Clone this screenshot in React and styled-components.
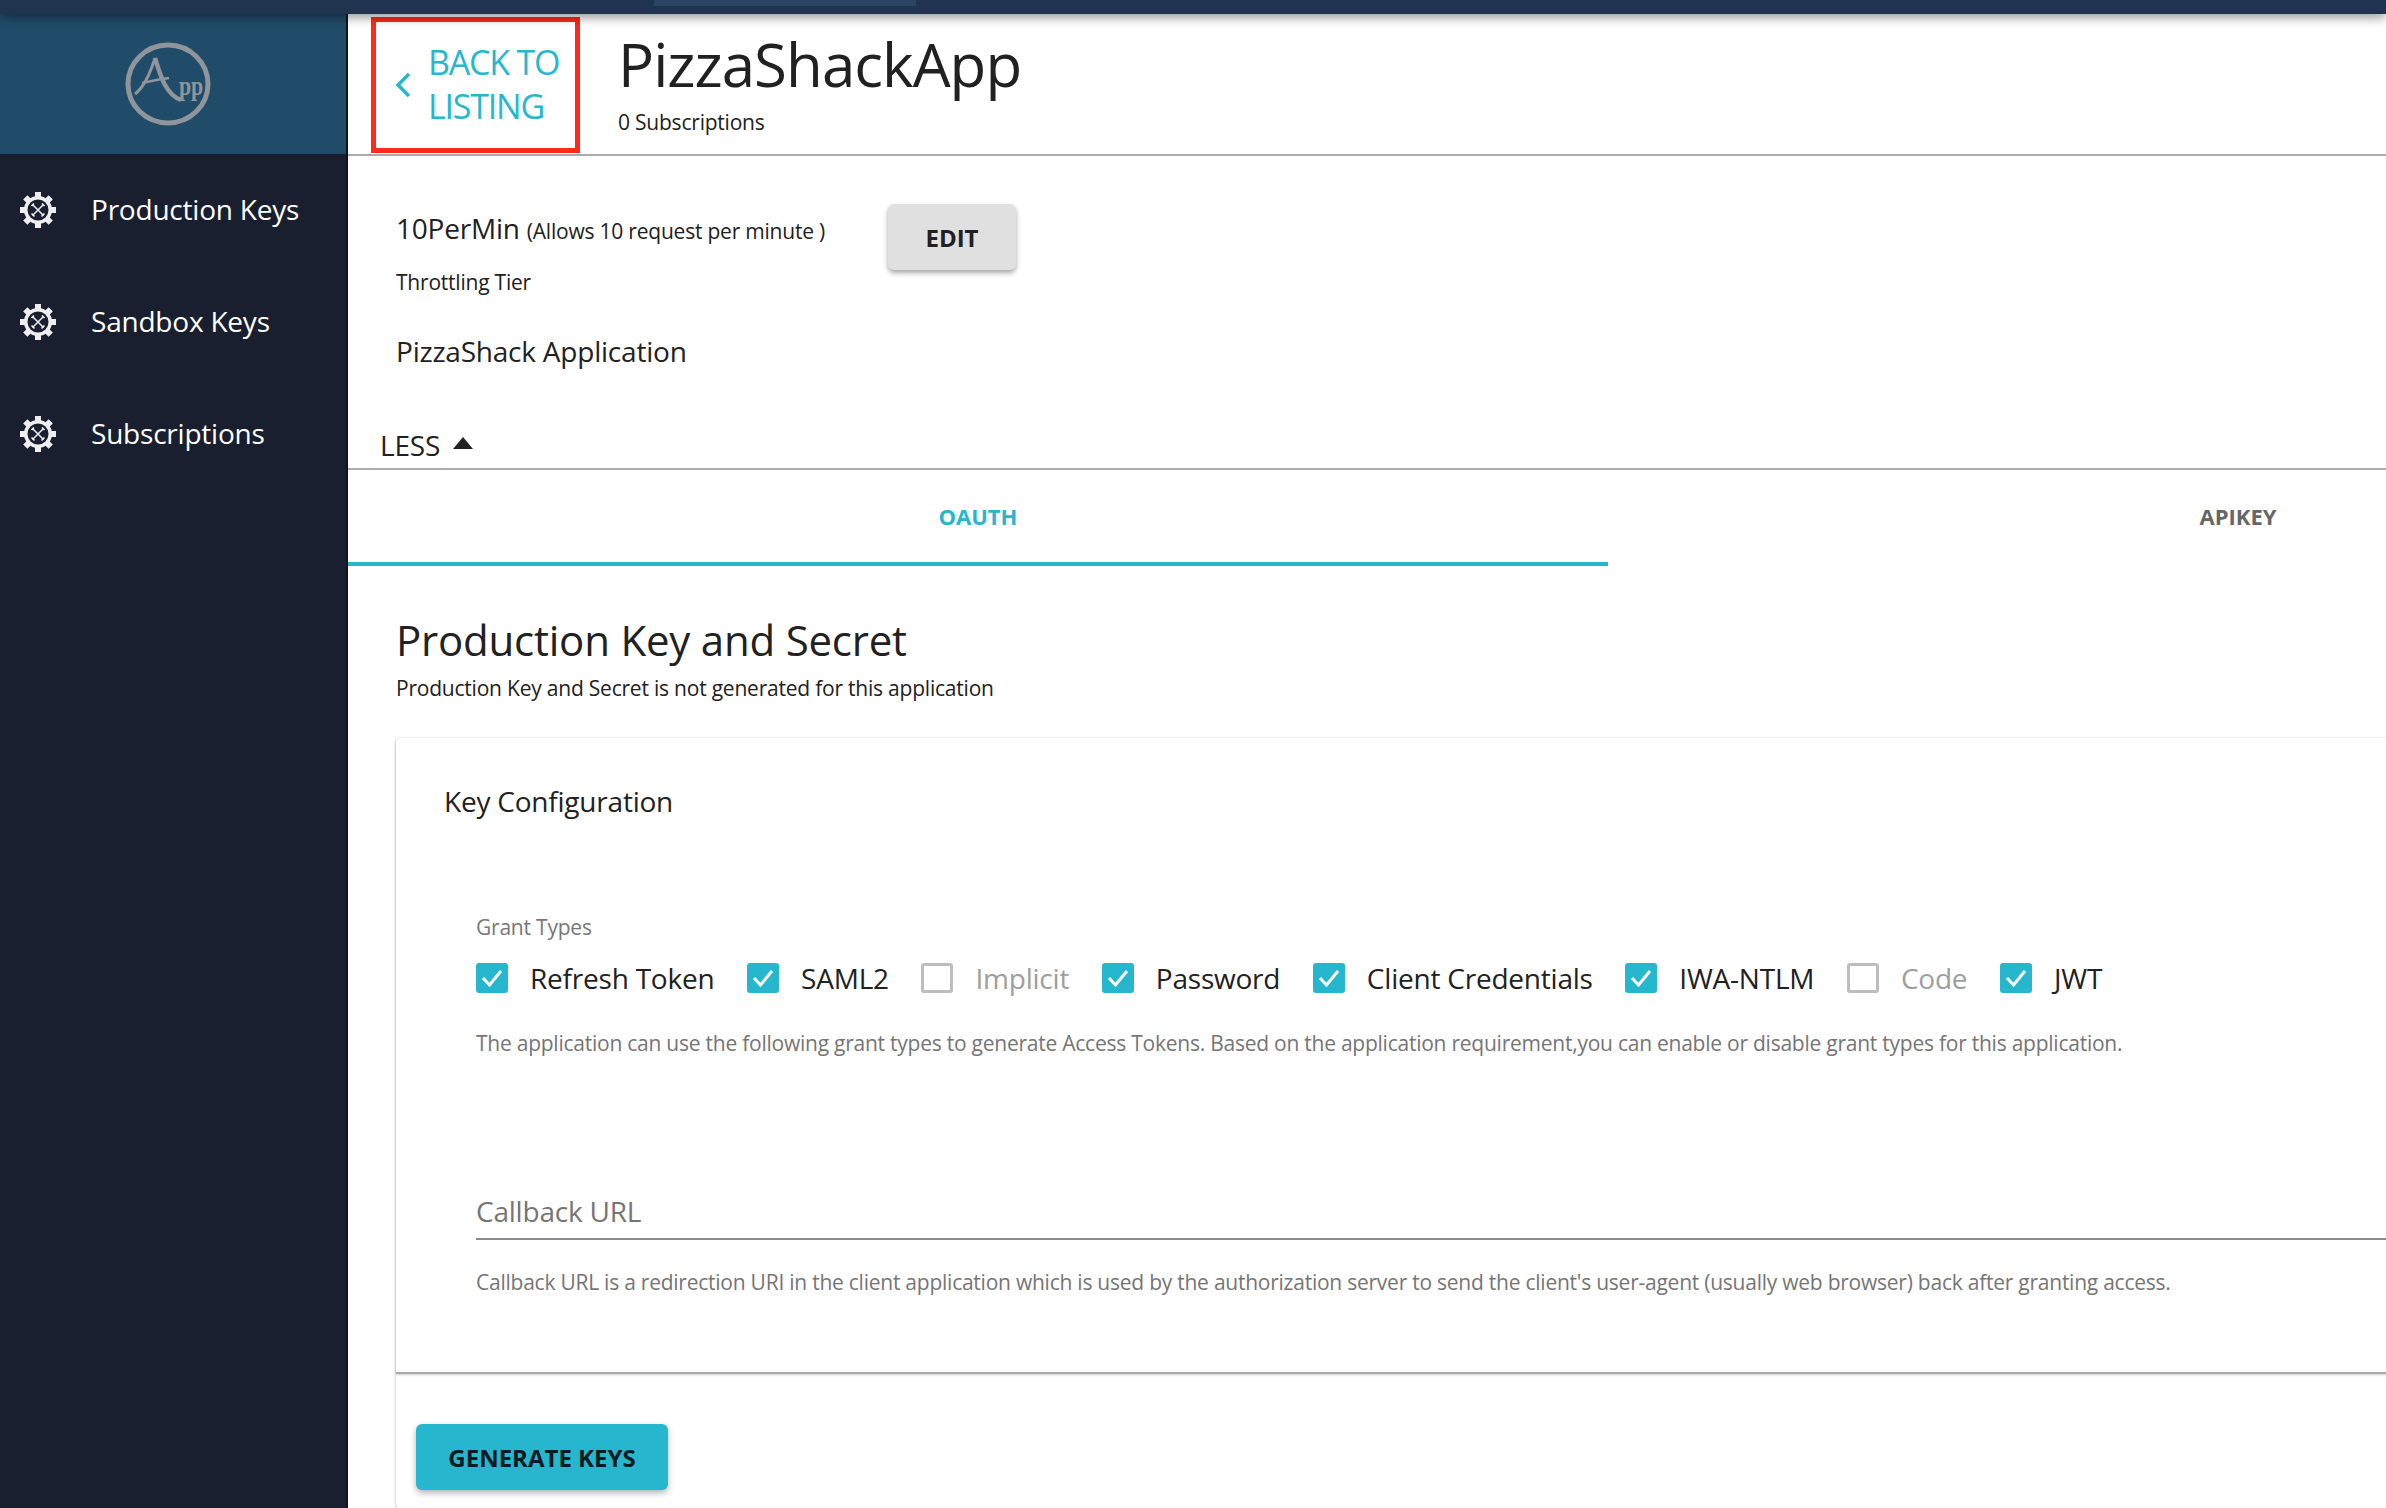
import React from 'react'
import styled, { createGlobalStyle } from 'styled-components'

const GlobalStyle = createGlobalStyle`
  html, body {
    margin: 0;
    padding: 0;
    background: #fff;
    overflow: hidden;
  }
  * {
    box-sizing: border-box;
  }
  body {
    font-family: "Open Sans", "Liberation Sans", sans-serif;
    color: #212121;
    letter-spacing: -0.0135em;
  }
`

const grants = [
  { label: 'Refresh Token', checked: true },
  { label: 'SAML2', checked: true },
  { label: 'Implicit', checked: false },
  { label: 'Password', checked: true },
  { label: 'Client Credentials', checked: true },
  { label: 'IWA-NTLM', checked: true },
  { label: 'Code', checked: false },
  { label: 'JWT', checked: true },
]

const navItems = ['Production Keys', 'Sandbox Keys', 'Subscriptions']

function GearIcon() {
  const teeth = [0, 45, 90, 135, 180, 225, 270, 315]
  return (
    <svg width="36" height="36" viewBox="0 0 36 36">
      {teeth.map((a) => (
        <rect key={a} x="15" y="0" width="6" height="7" fill="#eeeeee" transform={`rotate(${a} 18 18)`} />
      ))}
      <circle cx="18" cy="18" r="14" fill="#eeeeee" />
      <circle cx="18" cy="18" r="10.5" fill="#191f2e" />
      <path d="M13 13 L23 23 M23 13 L13 23" stroke="#eeeeee" strokeWidth="1.5" strokeLinecap="round" />
      <path d="M11.5 14 L14 11.5 M22 11.5 L24.5 14 M21.5 24.5 L24.5 21.5 M11.5 21.5 L14.5 24.5" stroke="#eeeeee" strokeWidth="1.6" />
    </svg>
  )
}

function AppLogo() {
  return (
    <svg width="90" height="88" viewBox="0 0 90 88">
      <ellipse cx="45" cy="44" rx="40" ry="39" fill="none" stroke="#8f959b" strokeWidth="5" />
      <path d="M12 54 C20 48 27 34 32 18" fill="none" stroke="#8f959b" strokeWidth="3" />
      <path d="M32 18 C37 34 42 54 58 60" fill="none" stroke="#8f959b" strokeWidth="4.5" />
      <path d="M19 43 C28 41 37 39 46 38" fill="none" stroke="#8f959b" strokeWidth="2.5" />
      <text x="56" y="55" fontFamily="Liberation Serif, serif" fontWeight="700" fontSize="27" fill="#8f959b" textLength="24" lengthAdjust="spacingAndGlyphs">pp</text>
    </svg>
  )
}

function CheckMark() {
  return (
    <svg width="22" height="20" viewBox="0 0 22 20">
      <path d="M2 10 L8.5 17 L20 3" fill="none" stroke="#fff" strokeWidth="3" />
    </svg>
  )
}

export default function App() {
  return (
    <>
      <GlobalStyle />
      <Page>
        <TopBar>
          <TopBarTab />
        </TopBar>
        <Body>
          <Sidebar>
            <LogoArea>
              <AppLogo />
            </LogoArea>
            <Nav>
              {navItems.map((item) => (
                <NavItem key={item}>
                  <GearIcon />
                  <NavLabel>{item}</NavLabel>
                </NavItem>
              ))}
            </Nav>
          </Sidebar>
          <Main>
            <Header>
              <BackBox>
                <svg width="16" height="26" viewBox="0 0 16 26">
                  <path d="M14 2 L3 13 L14 24" fill="none" stroke="#26b7ce" strokeWidth="3.5" />
                </svg>
                <BackText>
                  BACK TO
                  <br />
                  LISTING
                </BackText>
              </BackBox>
              <TitleBlock>
                <Title>PizzaShackApp</Title>
                <SubCount>0 Subscriptions</SubCount>
              </TitleBlock>
            </Header>

            <Details>
              <TierRow>
                <div>
                  <TierName>
                    10PerMin <TierNote>(Allows 10 request per minute )</TierNote>
                  </TierName>
                  <TierCaption>Throttling Tier</TierCaption>
                </div>
                <EditButton>EDIT</EditButton>
              </TierRow>
              <AppName>PizzaShack Application</AppName>
              <LessToggle>
                LESS
                <Triangle />
              </LessToggle>
            </Details>

            <Tabs>
              <Tab $active>OAUTH</Tab>
              <Tab>APIKEY</Tab>
            </Tabs>

            <Content>
              <SectionTitle>Production Key and Secret</SectionTitle>
              <SectionNote>Production Key and Secret is not generated for this application</SectionNote>
              <Card>
                <CardBody>
                  <CardTitle>Key Configuration</CardTitle>
                  <FieldLabel>Grant Types</FieldLabel>
                  <GrantRow>
                    {grants.map((g) => (
                      <Grant key={g.label}>
                        <CheckBox $checked={g.checked}>{g.checked && <CheckMark />}</CheckBox>
                        <GrantLabel $checked={g.checked}>{g.label}</GrantLabel>
                      </Grant>
                    ))}
                  </GrantRow>
                  <HelpText>
                    The application can use the following grant types to generate Access Tokens. Based on the application requirement,you can enable or disable grant types for this application.
                  </HelpText>
                  <UrlField>Callback URL</UrlField>
                  <UrlHelp>
                    Callback URL is a redirection URI in the client application which is used by the authorization server to send the client's user-agent (usually web browser) back after granting access.
                  </UrlHelp>
                </CardBody>
                <CardActions>
                  <GenerateButton>GENERATE KEYS</GenerateButton>
                </CardActions>
              </Card>
            </Content>
          </Main>
        </Body>
      </Page>
    </>
  )
}

const Page = styled.div`
  width: 2386px;
  height: 1508px;
  display: flex;
  flex-direction: column;
  overflow: hidden;
`

const TopBar = styled.div`
  height: 14px;
  flex: none;
  background: #20344f;
  box-shadow: 0 3px 12px rgba(0, 0, 0, 0.45);
  position: relative;
  z-index: 2;
`

const TopBarTab = styled.div`
  width: 262px;
  height: 6px;
  margin-left: 654px;
  background: #2a4562;
`

const Body = styled.div`
  flex: 1;
  display: flex;
  min-height: 0;
`

const Sidebar = styled.aside`
  width: 348px;
  flex: none;
  background: #191f2e;
  border-right: 2px solid #10141d;
`

const LogoArea = styled.div`
  height: 140px;
  background: #214c69;
  display: flex;
  align-items: center;
  justify-content: center;
  padding: 0 10px 0 0;
`

const Nav = styled.nav`
  padding-top: 0;
`

const NavItem = styled.div`
  height: 112px;
  display: flex;
  align-items: center;
  padding: 0 0 0 20px;
  gap: 35px;
`

const NavLabel = styled.span`
  color: #fff;
  font-size: 28px;
  padding-bottom: 2px;
`

const Main = styled.main`
  flex: 1;
  min-width: 0;
`

const Header = styled.header`
  height: 142px;
  display: flex;
  border-bottom: 2px solid #aaa;
  padding: 3px 0 0 23px;
`

const BackBox = styled.div`
  width: 209px;
  height: 136px;
  border: 5px solid #ff2a1a;
  display: flex;
  align-items: center;
  padding-left: 19px;
  gap: 17px;
  color: #26b7ce;
`

const BackText = styled.div`
  font-size: 34px;
  line-height: 44px;
  letter-spacing: -1.2px;
  padding-bottom: 3px;
`

const TitleBlock = styled.div`
  margin-left: 38px;
`

const Title = styled.h1`
  margin: 9px 0 0;
  font-size: 60px;
  font-weight: 400;
  line-height: 76px;
  letter-spacing: -0.95px;
`

const SubCount = styled.div`
  font-size: 21px;
  line-height: 28px;
  margin-top: 6px;
`

const Details = styled.section`
  height: 314px;
  padding: 48px 0 0 48px;
  border-bottom: 2px solid #aaa;
`

const TierRow = styled.div`
  display: flex;
  gap: 63px;
`

const TierName = styled.div`
  font-size: 28px;
  line-height: 40px;
  margin-top: 4px;
`

const TierNote = styled.span`
  font-size: 21px;
`

const TierCaption = styled.div`
  font-size: 21px;
  line-height: 28px;
  margin-top: 17px;
`

const EditButton = styled.button`
  width: 128px;
  height: 66px;
  border: 0;
  border-radius: 6px;
  background: #e0e0e0;
  color: #212121;
  font-family: inherit;
  font-size: 24px;
  font-weight: 700;
  box-shadow: 0 3px 5px rgba(0, 0, 0, 0.35);
`

const AppName = styled.div`
  font-size: 28px;
  line-height: 40px;
  margin-top: 35px;
`

const LessToggle = styled.div`
  display: flex;
  align-items: center;
  gap: 13px;
  font-size: 28px;
  line-height: 40px;
  margin: 54px 0 0 -16px;
`

const Triangle = styled.span`
  width: 0;
  height: 0;
  border-left: 10px solid transparent;
  border-right: 10px solid transparent;
  border-bottom: 12px solid #212121;
  margin-bottom: 4px;
`

const Tabs = styled.div`
  display: flex;
  width: 2520px;
  height: 96px;
`

const Tab = styled.div`
  width: 1260px;
  display: flex;
  align-items: center;
  justify-content: center;
  font-size: 22px;
  font-weight: 700;
  letter-spacing: 0;
  color: ${(p) => (p.$active ? '#26b7ce' : '#666')};
  border-bottom: 4px solid ${(p) => (p.$active ? '#26b7ce' : 'transparent')};
`

const Content = styled.div`
  padding: 48px 0 0 48px;
`

const SectionTitle = styled.h2`
  margin: 0;
  font-size: 42px;
  font-weight: 400;
  line-height: 52px;
`

const SectionNote = styled.p`
  margin: 8px 0 0;
  font-size: 21px;
  line-height: 28px;
`

const Card = styled.div`
  width: 2100px;
  height: 772px;
  margin-top: 36px;
  border-radius: 6px;
  box-shadow: 0 1px 3px rgba(0, 0, 0, 0.32);
`

const CardBody = styled.div`
  height: 636px;
  padding: 43px 0 0 48px;
  border-bottom: 2px solid #aaa;
  box-shadow: 0 1px 2px rgba(0, 0, 0, 0.2);
`

const CardTitle = styled.div`
  font-size: 28px;
  line-height: 40px;
`

const FieldLabel = styled.div`
  margin: 92px 0 0 32px;
  font-size: 21px;
  line-height: 28px;
  color: #777;
`

const GrantRow = styled.div`
  display: flex;
  gap: 32.6px;
  margin: 18px 0 0 32px;
`

const Grant = styled.div`
  display: flex;
  align-items: center;
  gap: 22px;
`

const CheckBox = styled.span`
  width: 32px;
  height: 30px;
  border-radius: 3px;
  display: flex;
  align-items: center;
  justify-content: center;
  background: ${(p) => (p.$checked ? '#26b7ce' : '#fff')};
  border: ${(p) => (p.$checked ? '0' : '3px solid #bdbdbd')};
`

const GrantLabel = styled.span`
  font-size: 28px;
  line-height: 38px;
  color: ${(p) => (p.$checked ? '#212121' : '#9e9e9e')};
`

const HelpText = styled.p`
  margin: 32px 0 0 32px;
  font-size: 21px;
  line-height: 28px;
  letter-spacing: -0.0115em;
  color: #757575;
`

const UrlField = styled.div`
  margin: 128px 0 0 32px;
  height: 55px;
  font-size: 28px;
  line-height: 52px;
  color: #757575;
  border-bottom: 2px solid #8a8a8a;
`

const UrlHelp = styled.p`
  margin: 28px 0 0 32px;
  font-size: 21px;
  line-height: 28px;
  letter-spacing: -0.0115em;
  color: #757575;
`

const CardActions = styled.div`
  padding: 50px 0 0 20px;
`

const GenerateButton = styled.button`
  width: 252px;
  height: 66px;
  border: 0;
  border-radius: 6px;
  background: #26b7ce;
  color: #0c1a22;
  font-family: inherit;
  font-size: 24px;
  font-weight: 700;
  box-shadow: 0 3px 6px rgba(0, 0, 0, 0.3);
`
